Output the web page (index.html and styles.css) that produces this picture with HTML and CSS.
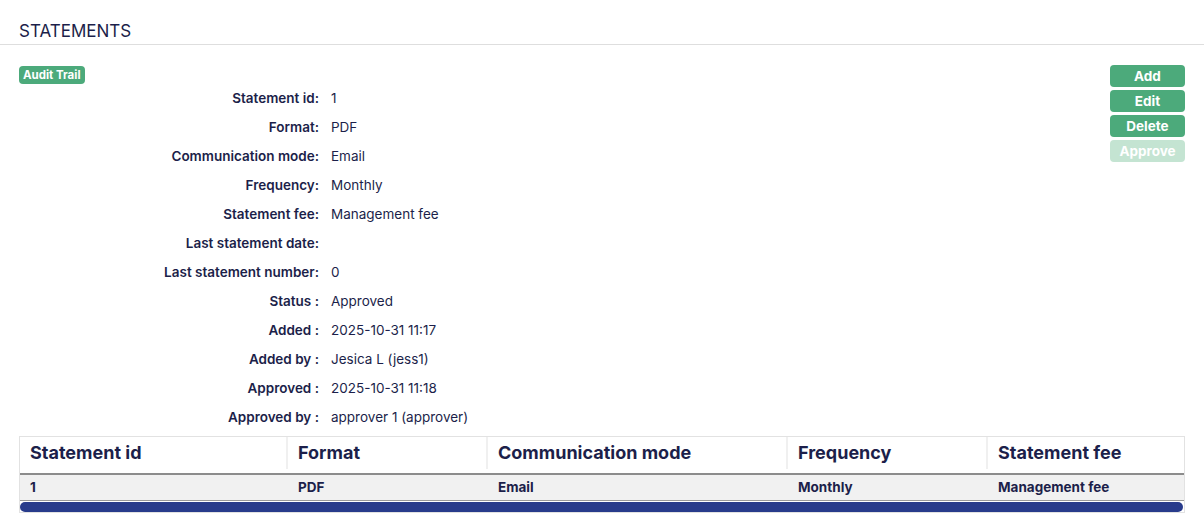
FILE: index.html
```html
<!DOCTYPE html>
<html>
<head>
<meta charset="utf-8">
<link rel="stylesheet" href="styles.css">
</head>
<body>
<header class="page-header"><h1 class="title">STATEMENTS</h1></header>
<main class="content">
  <div class="top">
    <div class="info">
      <span class="badge">Audit Trail</span>
      <dl class="details">
        <dt>Statement id:</dt><dd>1</dd>
        <dt>Format:</dt><dd>PDF</dd>
        <dt>Communication mode:</dt><dd>Email</dd>
        <dt>Frequency:</dt><dd>Monthly</dd>
        <dt>Statement fee:</dt><dd>Management fee</dd>
        <dt>Last statement date:</dt><dd></dd>
        <dt>Last statement number:</dt><dd>0</dd>
        <dt>Status :</dt><dd>Approved</dd>
        <dt>Added :</dt><dd>2025-10-31 11:17</dd>
        <dt>Added by :</dt><dd>Jesica L (jess1)</dd>
        <dt>Approved :</dt><dd>2025-10-31 11:18</dd>
        <dt>Approved by :</dt><dd>approver 1 (approver)</dd>
      </dl>
    </div>
    <div class="actions">
      <button class="btn">Add</button>
      <button class="btn">Edit</button>
      <button class="btn">Delete</button>
      <button class="btn disabled">Approve</button>
    </div>
  </div>
  <div class="table">
    <div class="thead">
      <div class="th">Statement id</div>
      <div class="th">Format</div>
      <div class="th">Communication mode</div>
      <div class="th">Frequency</div>
      <div class="th last">Statement fee</div>
    </div>
    <div class="tbody">
      <div class="td">1</div>
      <div class="td">PDF</div>
      <div class="td">Email</div>
      <div class="td">Monthly</div>
      <div class="td">Management fee</div>
    </div>
    <div class="scroll"><div class="thumb"></div></div>
  </div>
</main>
</body>
</html>
```
FILE: styles.css
```css
* { box-sizing: border-box; }
body {
  margin: 0;
  font-family: Inter, "Noto Sans", sans-serif;
  color: #1c1f4a;
  background: #fff;
}
.page-header {
  height: 45px;
  border-bottom: 1px solid #dedede;
  padding: 20px 19px 0;
}
.title {
  margin: 0;
  font-size: 17px;
  font-weight: 400;
  line-height: 22px;
}
.content {
  padding: 0 19px;
}
.top {
  display: flex;
  justify-content: space-between;
  padding-top: 20px;
}
.badge {
  display: block;
  width: fit-content;
  background: #4caa7b;
  color: #fff;
  font-size: 11.5px;
  font-weight: 700;
  line-height: 18px;
  padding: 0 4px;
  border-radius: 4px;
  margin-top: 1px;
}
.details {
  display: grid;
  grid-template-columns: 300px auto;
  column-gap: 12px;
  margin: 0;
  font-size: 13.5px;
  line-height: 29px;
}
.details dt {
  text-align: right;
  font-weight: 600;
}
.details dd { margin: 0; }
.actions {
  display: flex;
  flex-direction: column;
  gap: 3px;
  width: 75px;
}
.btn {
  height: 22px;
  border: none;
  border-radius: 4px;
  background: #4caa7b;
  color: #fff;
  font-family: Inter, "Noto Sans", sans-serif;
  font-size: 13.5px;
  font-weight: 700;
  padding: 0;
}
.btn.disabled { background: #c4e4d2; }
.table {
  margin-top: 4px;
  border: 1px solid #e2e2e2;
}
.thead, .tbody {
  display: grid;
  grid-template-columns: 268px 200px 300px 200px 1fr;
}
.thead {
  border-bottom: 2px solid #8c8c8c;
}
.th {
  font-size: 18px;
  font-weight: 700;
  line-height: 32px;
  padding: 0 10px;
  margin-bottom: 4px;
  border-right: 2px solid #f0f0f0;
}
.th.last { border-right: none; }
.tbody {
  background: #f1f1f1;
  border-bottom: 1px solid #999;
}
.td {
  font-size: 13.5px;
  font-weight: 700;
  line-height: 25px;
  padding: 0 10px;
}
.scroll {
  height: 11px;
  padding: 1px 1px 0 0;
}
.thumb {
  height: 10px;
  border-radius: 5px;
  background: #283b8b;
}
```
